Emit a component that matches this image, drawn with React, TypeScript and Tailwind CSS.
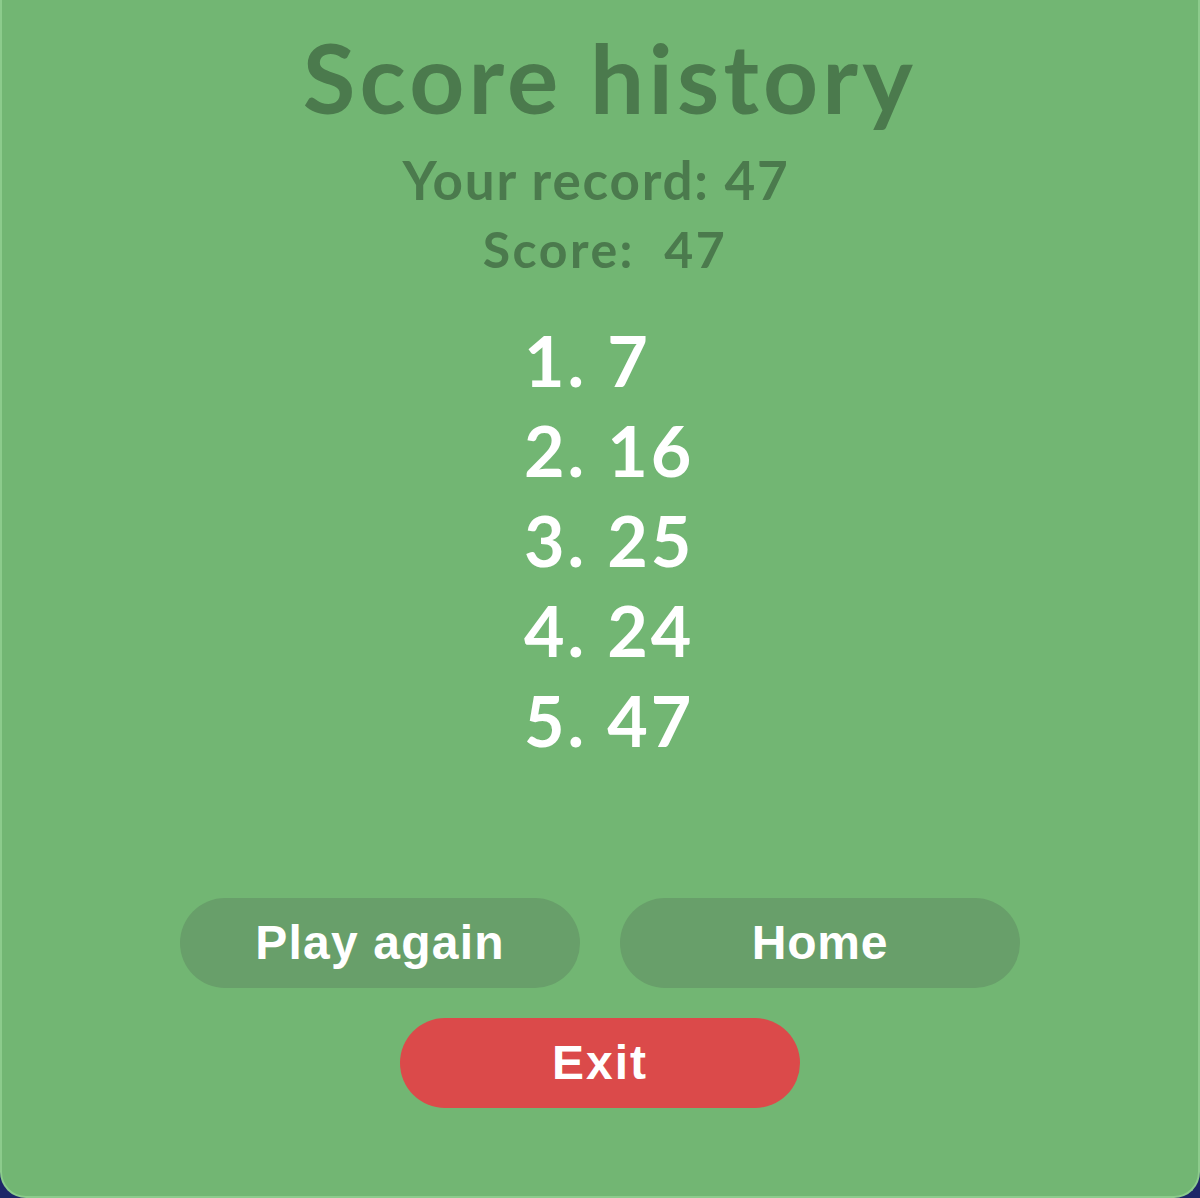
import React from "react";

const scores = [7, 16, 25, 24, 47];

export default function App() {
  return (
    <div className="h-[1198px] w-[1200px] bg-[#1e2668]">
      <div
        className="flex h-full w-full flex-col items-center rounded-b-[26px] border-x-2 border-b-2 border-[#8ccb8c] bg-[#72b673]"
        style={{ fontFamily: "Lato, 'Open Sans', sans-serif" }}
      >
        <h1 className="ml-[20px] pt-[29px] text-[96px] font-bold leading-none tracking-[4.2px] text-[#4b7a4d]">
          Score history
        </h1>
        <p className="mr-[8px] mt-[28px] text-[53px] font-bold leading-none tracking-[1.8px] text-[#4b7a4d]">
          Your record: 47
        </p>
        <p className="ml-[10px] mt-[18px] whitespace-pre text-[50px] font-bold leading-none tracking-[2.5px] text-[#4b7a4d]">
          {"Score:  47"}
        </p>

        <ol className="mt-[41px] w-[200px] pl-[24px] text-left">
          {scores.map((s, i) => (
            <li key={i} className="whitespace-pre text-[70px] font-bold leading-[90px] tracking-[3px] text-white">
              {`${i + 1}. ${s}`}
            </li>
          ))}
        </ol>

        <div
          className="mt-[133px] flex flex-col items-center gap-[30px]"
          style={{ fontFamily: "'Liberation Sans', Arial, sans-serif" }}
        >
          <div className="flex gap-[40px]">
            <button className="flex h-[90px] w-[400px] items-center justify-center rounded-full bg-[#689f6a] text-[48px] font-bold tracking-[1.2px] text-white">
              Play again
            </button>
            <button className="flex h-[90px] w-[400px] items-center justify-center rounded-full bg-[#689f6a] text-[48px] font-bold tracking-[0.8px] text-white">
              Home
            </button>
          </div>
          <button className="flex h-[90px] w-[400px] items-center justify-center rounded-full bg-[#db4a4a] text-[48px] font-bold tracking-[2px] text-white">
            Exit
          </button>
        </div>
      </div>
    </div>
  );
}
